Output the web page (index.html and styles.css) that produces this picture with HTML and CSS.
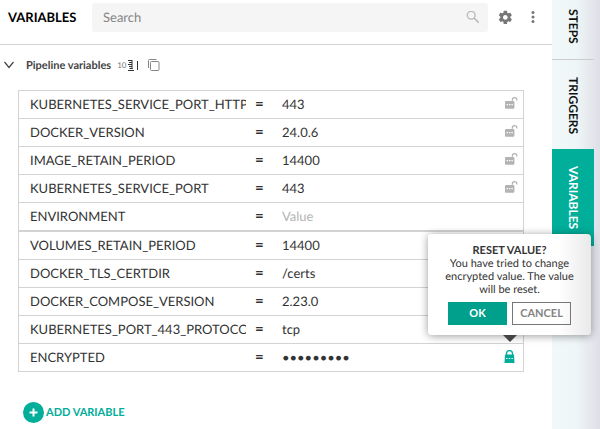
FILE: index.html
```html
<!DOCTYPE html>
<html lang="en">
<head>
<meta charset="utf-8">
<title>Variables</title>
<link rel="stylesheet" href="styles.css">
</head>
<body>
<svg width="0" height="0" class="defs" aria-hidden="true">
  <symbol id="unlocked" viewBox="0 0 14 14">
    <path d="M8.300 3.800V2.900a2.300 2.300 0 0 1 4.600 0v.6" fill="none" stroke="currentColor" stroke-width="1.200"/>
    <rect x="1" y="4" width="9.400" height="7.800" rx="1" fill="currentColor"/>
    <path d="M2.600 7.700h1.400m1 0h1.400m1 0h1.400" stroke="#fff" stroke-width="1.200"/>
  </symbol>
</svg>
<div class="layout">
  <main class="panel">
    <header class="toolbar">
      <h1 class="title">VARIABLES</h1>
      <label class="search">
        <input class="search-input" type="text" placeholder="Search" aria-label="Search">
        <svg class="search-icon" width="14" height="14" viewBox="0 0 14 14" fill="none" stroke="currentColor"><circle cx="5.200" cy="4.200" r="3.900" stroke-width="1.400"/><path d="M8 7l4.700 4.700" stroke-width="1.700"/></svg>
      </label>
      <button class="icon-button" type="button" aria-label="Settings">
        <svg width="14" height="14" viewBox="1 1 21 21" fill="currentColor"><path d="M19.430 12.980c.04-.32.070-.64.070-.98s-.03-.66-.07-.98l2.110-1.650c.19-.15.240-.42.120-.64l-2-3.460c-.12-.22-.39-.3-.61-.22l-2.490 1c-.52-.4-1.080-.73-1.690-.98l-.38-2.650C14.460 2.180 14.250 2 14 2h-4c-.25 0-.46.180-.49.420l-.38 2.650c-.61.250-1.170.590-1.690.98l-2.490-1c-.23-.09-.49 0-.61.220l-2 3.460c-.13.220-.07.490.120.640l2.110 1.650c-.04.320-.07.650-.07.980s.03.660.070.980l-2.110 1.650c-.19.150-.24.420-.12.640l2 3.460c.12.220.390.300.610.220l2.490-1c.52.400 1.080.730 1.690.980l.38 2.650c.03.240.240.420.490.420h4c.25 0 .46-.18.490-.42l.38-2.650c.61-.25 1.170-.59 1.690-.98l2.490 1c.23.090.490 0 .61-.22l2-3.460c.12-.22.070-.49-.12-.64l-2.110-1.650zM12 15.500c-1.930 0-3.500-1.570-3.500-3.500s1.570-3.500 3.500-3.500 3.500 1.570 3.500 3.500-1.570 3.500-3.500 3.500z"/></svg>
      </button>
      <button class="icon-button" type="button" aria-label="More">
        <svg width="14" height="14" viewBox="0 0 14 14" fill="currentColor"><circle cx="7" cy="2.500" r="1.500"/><circle cx="7" cy="7" r="1.500"/><circle cx="7" cy="11.500" r="1.500"/></svg>
      </button>
    </header>

    <section class="content">
      <div class="group-head">
        <button class="plain" type="button" aria-label="Collapse">
          <svg width="10" height="8" viewBox="0 0 10 8" fill="none" stroke="#444" stroke-width="1.200"><path d="M.5 1l4.500 5.500L9.500 1"/></svg>
        </button>
        <h2 class="group-title">Pipeline variables</h2>
        <span class="count">10</span>
        <button class="plain" type="button" aria-label="Edit as text">
          <svg width="12" height="14" viewBox="0 0 12 14" fill="none" stroke="#333"><path d="M0 2.500h4M1 4.500h3M0 6.500h4M1 8.500h3M0 12.500h6M1.500 10.500h3M4 2v9M9.500 3v9"/></svg>
        </button>
        <button class="plain" type="button" aria-label="Copy">
          <svg width="12" height="13" viewBox="0 0 12 13" fill="none" stroke="#858585"><path d="M.5 9v-7.500q0-1 1-1h7"/><rect x="2.500" y="2.500" width="8.500" height="9" rx="1"/></svg>
        </button>
      </div>

      <div class="rows">
        <div class="row"><input class="name" aria-label="Name" value="KUBERNETES_SERVICE_PORT_HTTPS"><span class="equals">=</span><input class="value" aria-label="Value" value="443"><button class="lock" type="button" aria-label="Encrypt"><svg width="14" height="14"><use href="#unlocked"/></svg></button></div>
        <div class="row"><input class="name" aria-label="Name" value="DOCKER_VERSION"><span class="equals">=</span><input class="value" aria-label="Value" value="24.0.6"><button class="lock" type="button" aria-label="Encrypt"><svg width="14" height="14"><use href="#unlocked"/></svg></button></div>
        <div class="row"><input class="name" aria-label="Name" value="IMAGE_RETAIN_PERIOD"><span class="equals">=</span><input class="value" aria-label="Value" value="14400"><button class="lock" type="button" aria-label="Encrypt"><svg width="14" height="14"><use href="#unlocked"/></svg></button></div>
        <div class="row"><input class="name" aria-label="Name" value="KUBERNETES_SERVICE_PORT"><span class="equals">=</span><input class="value" aria-label="Value" value="443"><button class="lock" type="button" aria-label="Encrypt"><svg width="14" height="14"><use href="#unlocked"/></svg></button></div>
        <div class="row"><input class="name" aria-label="Name" value="ENVIRONMENT"><span class="equals">=</span><input class="value" aria-label="Value" placeholder="Value"></div>
      </div>
      <div class="rows">
        <div class="row"><input class="name" aria-label="Name" value="VOLUMES_RETAIN_PERIOD"><span class="equals">=</span><input class="value" aria-label="Value" value="14400"></div>
        <div class="row"><input class="name" aria-label="Name" value="DOCKER_TLS_CERTDIR"><span class="equals">=</span><input class="value" aria-label="Value" value="/certs"></div>
        <div class="row"><input class="name" aria-label="Name" value="DOCKER_COMPOSE_VERSION"><span class="equals">=</span><input class="value" aria-label="Value" value="2.23.0"></div>
        <div class="row"><input class="name" aria-label="Name" value="KUBERNETES_PORT_443_PROTOCOL"><span class="equals">=</span><input class="value" aria-label="Value" value="tcp"></div>
        <div class="row">
          <input class="name" aria-label="Name" value="ENCRYPTED"><span class="equals">=</span><input class="value" type="password" aria-label="Value" value="encrypted">
          <button class="lock locked" type="button" aria-label="Encrypted">
            <svg width="14" height="14" viewBox="0 0 14 14"><path d="M2.500 6V3.500a3 3 0 0 1 6 0V6" fill="none" stroke="currentColor" stroke-width="1.300"/><path d="M1 4.500h9l.5 8.500H.5z" fill="currentColor"/><path d="M2.100 8.500h1.400m1.300 0h1.400m1.300 0h1.400" stroke="#fff" stroke-width="1.200"/></svg>
          </button>
          <div class="popover" role="dialog" aria-labelledby="reset-title">
            <h3 class="popover-title" id="reset-title">RESET VALUE?</h3>
            <p class="popover-text">You have tried to change encrypted value. The value will be reset.</p>
            <div class="actions">
              <button class="action primary" type="button">OK</button>
              <button class="action" type="button">CANCEL</button>
            </div>
          </div>
        </div>
      </div>

      <button class="add" type="button">
        <svg width="21" height="21" viewBox="0 0 21 21"><circle cx="10.500" cy="10.500" r="10.500" fill="#00ae9a"/><path d="M10.500 6.500v8M6.500 10.500h8" stroke="#fff" stroke-width="2"/></svg>
        <span>ADD VARIABLE</span>
      </button>
    </section>
  </main>

  <nav class="tabs">
    <a class="tab" href="#steps">STEPS</a>
    <a class="tab" href="#triggers">TRIGGERS</a>
    <a class="tab active" href="#variables">VARIABLES</a>
  </nav>
</div>
</body>
</html>
```
FILE: styles.css
```css
* { box-sizing: border-box; }

body {
  margin: 0;
  background: #fff;
  color: #333;
  font-family: Lato, sans-serif;
  font-size: 13px;
  text-rendering: geometricPrecision;
}

h1, h2, h3, p { margin: 0; }

button, input {
  margin: 0;
  padding: 0;
  border: 0;
  background: none;
  color: inherit;
  font: inherit;
  text-rendering: inherit;
}

svg { display: block; }
.defs { position: absolute; }

.layout {
  display: flex;
  min-height: 100vh;
}

.panel {
  flex: 1;
  min-width: 0;
}

.toolbar {
  display: flex;
  align-items: center;
  padding: 3px 12px 12px 8px;
  border-bottom: 1px solid #d3d3d3;
}

.title {
  width: 84px;
  padding-bottom: 2px;
  color: #000;
  font-size: 13px;
  font-weight: 700;
}

.search {
  display: flex;
  flex: 1;
  align-items: center;
  height: 29px;
  min-width: 0;
  margin-right: 10px;
  padding: 0 8px 0 11px;
  border-radius: 3px;
  background: #f5f5f5;
}

.search-input {
  flex: 1;
  min-width: 0;
  padding-bottom: 2px;
}

.search-input::placeholder {
  color: #858585;
  opacity: 1;
}

.search-icon { color: #bababa; }

.icon-button {
  padding-bottom: 2px;
  color: #777;
}

.icon-button + .icon-button { margin-left: 14px; }

.content { padding: 12px 28px 0 18px; }

.group-head {
  display: flex;
  align-items: center;
  height: 16px;
  margin: 0 0 17px -14px;
}

.group-title {
  margin: 0 6px 0 12px;
  color: #444;
  font-size: 11px;
  font-weight: 700;
}

.count {
  margin-right: 2px;
  color: #777;
  font-size: 8px;
}

.group-head .plain:last-child { margin-left: 8px; }

.rows {
  border: 1px solid #d3d3d3;
}

.row {
  position: relative;
  display: flex;
  align-items: center;
  height: 28px;
  padding: 0 5px 2px 11px;
}

.row:first-child { height: 27px; }
.row + .row { border-top: 1px solid #d3d3d3; }

.name { width: 216px; }

.equals {
  width: 36px;
  padding-left: 9px;
  font-size: 15px;
  font-weight: 700;
  line-height: 16px;
}

.value {
  flex: 1;
  min-width: 0;
}

.value::placeholder {
  color: #b5b5b5;
  opacity: 1;
}

.lock { color: #b3b3b3; }
.locked { color: #00ae9a; }

.popover {
  position: absolute;
  right: -68px;
  bottom: 36px;
  width: 163px;
  padding: 10px 16px;
  border-radius: 4px;
  background: linear-gradient(90deg, #fff 80%, #e9e9e9);
  box-shadow: 0 1px 8px rgba(0, 0, 0, 0.4);
  font-size: 11px;
  line-height: 13px;
  text-align: center;
}

.popover::after {
  content: "";
  position: absolute;
  top: 100%;
  left: calc(50% - 7px);
  border: 7px solid transparent;
  border-top-color: #444;
  border-bottom: 0;
}

.popover-title {
  font-size: 11px;
  font-weight: 700;
}

.actions {
  display: flex;
  justify-content: center;
  gap: 5px;
  margin-top: 6px;
}

.action {
  width: 59px;
  height: 23px;
  border: 1px solid #777;
  color: #858585;
  font-weight: 700;
}

.primary {
  border-color: #00a08d;
  background: #00a08d;
  color: #fff;
}

.add {
  display: flex;
  align-items: center;
  gap: 2px;
  margin: 30px 0 0 5px;
  color: #00ae9a;
  font-size: 11px;
  font-weight: 700;
}

.tabs {
  display: flex;
  flex-direction: column;
  width: 48px;
  padding-right: 6px;
  background: linear-gradient(90deg, #f1f8f8 0%, #eff6f7 50%, #dfdfe7 100%);
}

.tab {
  display: flex;
  align-items: center;
  justify-content: flex-start;
  padding: 17px 0 15px;
  color: #111;
  font-size: 12px;
  font-weight: 700;
  text-decoration: none;
  writing-mode: vertical-rl;
}

.tab:first-child {
  padding-top: 9px;
  border-bottom: 1px solid #ccc;
}

.active {
  padding-bottom: 17px;
  background: #00ae9a;
  color: #fff;
}
```
